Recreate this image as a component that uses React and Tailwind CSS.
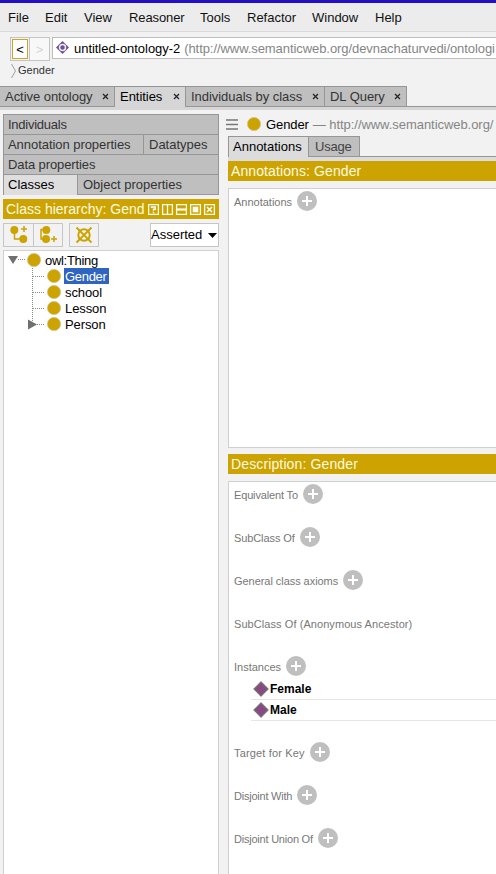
const FONT = "font-['Liberation_Sans',Arial,sans-serif]";

const MENU = [
  ['File', 'w-[37px]'],
  ['Edit', 'w-[39px]'],
  ['View', 'w-[45px]'],
  ['Reasoner', 'w-[71px] tracking-[-0.1px]'],
  ['Tools', 'w-[47px]'],
  ['Refactor', 'w-[65px]'],
  ['Window', 'w-[63px]'],
  ['Help', 'w-[40px]'],
];

const TABS = [
  { label: 'Active ontology', width: 'w-[115px]' },
  { label: 'Entities', width: 'w-[71px]', active: true },
  { label: 'Individuals by class', width: 'w-[139px]' },
  { label: 'DL Query', width: 'w-[82px]' },
];

function Dot() {
  return (
    <svg className="h-4 w-4 shrink-0" viewBox="0 0 16 16">
      <circle cx="8" cy="8" r="6.6" fill="#cca300" stroke="#d2c48c" strokeWidth="0.8" />
    </svg>
  );
}

function AddButton() {
  return (
    <svg className="h-5 w-5 shrink-0" viewBox="0 0 20 20">
      <circle cx="10" cy="10" r="10" fill="#bfbfbf" />
      <path d="M10 5v10M5 10h10" stroke="#fff" strokeWidth="2" />
    </svg>
  );
}

function Menu() {
  return (
    <div className="flex h-[29px] shrink-0 items-center border-b border-[#dadada] bg-[#ececec] pl-2 text-[13px] text-[#111]">
      {MENU.map(([label, width]) => (
        <span key={label} className={`${width} shrink-0`}>{label}</span>
      ))}
    </div>
  );
}

function AddressBar() {
  return (
    <div className="flex h-[54px] shrink-0 flex-col pl-[10px] pt-[5px]">
      <div className="flex h-6 items-start gap-[2px]">
        <div className="flex h-6 w-10 shrink-0 border border-[#c4c4c4] text-[13px]">
          <div className="flex w-[19px] items-center justify-center border-r border-[#c4c4c4] p-px">
            <div className="flex h-full w-full items-center justify-center border border-[#c9a62c] bg-white text-black">&lt;</div>
          </div>
          <div className="flex flex-1 items-center justify-center bg-[#f8f8f8] text-[#d4d4d4]">&gt;</div>
        </div>
        <div className="flex h-[22px] flex-1 items-center whitespace-nowrap border-y border-l border-[#bdbdbd] bg-white pl-[3px] text-[13px]">
          <svg className="relative -top-px h-[13px] w-[13px] shrink-0" viewBox="0 0 13 13">
            <path d="M6.5 0L13 6.5L6.5 13L0 6.5z" fill="#6b5191" />
            <circle cx="6.5" cy="6.5" r="3" fill="none" stroke="#f3edf9" strokeWidth="1.5" />
          </svg>
          <span className="ml-[5px] tracking-[-0.04px] text-black">untitled-ontology-2</span>
          <span className="ml-1 tracking-[-0.07px] text-[#858585]">(http://www.semanticweb.org/devnachaturvedi/ontologi</span>
        </div>
      </div>
      <div className="flex h-[19px] items-center text-[11px] text-[#333]">
        <svg className="h-4 w-2 shrink-0" viewBox="0 0 8 16">
          <path d="M1.5 1L5.5 8L1.5 15" fill="none" stroke="#a0a0a0" />
        </svg>
        Gender
      </div>
    </div>
  );
}

function MainTabs() {
  return (
    <div className="flex h-[24px] shrink-0 flex-col bg-[#d6d6d6]">
      <div className="flex h-[21px] shrink-0 items-end border-b border-[#969696] bg-[#f2f2f2]">
        {TABS.map((t) => (
          <div
            key={t.label}
            className={`${t.width} flex shrink-0 items-center justify-between border-r border-t border-[#969696] pl-[5px] pr-[5px] text-[13px] ${
              t.active ? '-mb-px h-[21px] bg-[#d6d6d6] pb-px text-black' : 'h-5 bg-[#bfbfbf] text-[#333]'
            }`}
          >
            <span className="whitespace-nowrap tracking-[-0.04px]">{t.label}</span>
            <svg className="h-[7px] w-[7px]" viewBox="0 0 7 7">
              <path d="M1 1l5 5M6 1L1 6" stroke="#222" strokeWidth="1.2" />
            </svg>
          </div>
        ))}
      </div>
    </div>
  );
}

function StackedTabs() {
  return (
    <div className="flex h-[81px] flex-col border-l border-r border-[#969696] text-[13px] text-[#333]">
      <div className="flex h-5 items-center border-t border-[#969696] bg-[#bfbfbf] pl-1 tracking-[-0.25px]">Individuals</div>
      <div className="flex h-5 border-t border-[#969696] bg-[#bfbfbf]">
        <div className="flex w-[140px] items-center border-r border-[#969696] pl-1 tracking-[-0.05px]">Annotation properties</div>
        <div className="flex items-center pl-[5px]">Datatypes</div>
      </div>
      <div className="flex h-5 items-center border-t border-[#969696] bg-[#bfbfbf] pl-1 tracking-[-0.1px]">Data properties</div>
      <div className="flex h-[21px] border-t border-[#969696]">
        <div className="flex w-[74px] items-center border-r border-[#969696] bg-[#dedede] pb-px pl-1 text-black">Classes</div>
        <div className="flex flex-1 items-center border-b border-[#969696] bg-[#bfbfbf] pl-[5px]">Object properties</div>
      </div>
    </div>
  );
}

function HeaderIcons() {
  return (
    <svg className="h-[11px] w-[68px] shrink-0" viewBox="0 0 68 11" fill="none" stroke="#fffdf0" strokeWidth="1.3">
      <rect x="0.6" y="0.6" width="9.8" height="9.8" />
      <path d="M3.6 4V2.9h3.7v2.4H5.5v1.5M5.5 7.8v1.4" strokeWidth="1.5" />
      <path d="M14.6 0.6h9.8v9.8h-9.8zM19.5 0v11" />
      <path d="M28.6 0.6h9.8v9.8h-9.8z" />
      <path d="M28 5.5h11" strokeWidth="2.2" />
      <rect x="42.6" y="0.6" width="9.8" height="9.8" />
      <rect x="44.7" y="2.7" width="5.6" height="5.6" fill="#fffdf0" stroke="none" />
      <rect x="56.6" y="0.6" width="9.8" height="9.8" />
      <path d="M59 3l5 5M64 3l-5 5" strokeWidth="1.7" />
    </svg>
  );
}

function Toolbar() {
  return (
    <div className="mt-[4px] flex h-6 items-stretch">
      <div className="flex w-[60px] border border-[#c6c6c6]">
        <div className="flex w-[30px] items-center justify-center border-r border-[#c6c6c6]">
          <svg className="h-[22px] w-7" viewBox="0 0 28 22" fill="#cca300">
            <circle cx="9.3" cy="6" r="4" />
            <circle cx="18.3" cy="15" r="4" />
            <path d="M9.5 8v7h6M19 2v6M16 5h6" fill="none" stroke="#cca300" strokeWidth="1.5" />
          </svg>
        </div>
        <div className="flex flex-1 items-center justify-center">
          <svg className="h-[22px] w-7" viewBox="0 0 28 22" fill="#cca300">
            <circle cx="12.3" cy="6" r="4" />
            <circle cx="12" cy="15" r="4" />
            <path d="M10 5.5H7v9.5h4M20 12v6M17 15h6" fill="none" stroke="#cca300" strokeWidth="1.5" />
          </svg>
        </div>
      </div>
      <div className="ml-[6px] flex w-[30px] items-center justify-center border border-[#c6c6c6]">
        <svg className="h-[18px] w-[18px]" viewBox="0 0 18 18" fill="none" stroke="#cca300" strokeWidth="1.8">
          <circle cx="9" cy="9" r="5.7" strokeWidth="2" />
          <path d="M1.5 1.5l15 15M16.5 1.5l-15 15" />
        </svg>
      </div>
      <div className="ml-auto flex w-[69px] items-center border border-[#c6c6c6] bg-white text-[13px] text-black">
        <span className="-mt-[2px] w-[57px]">Asserted</span>
        <svg className="h-[5px] w-[9px] shrink-0" viewBox="0 0 9 5"><path d="M0 0h9L4.5 5z" /></svg>
      </div>
    </div>
  );
}

function TreeRow({ label, selected, expandable, spacing = 'tracking-[-0.1px]' }) {
  return (
    <div className="flex h-4 items-center">
      <svg className="h-4 w-[42px] shrink-0" viewBox="0 0 42 16">
        <path d="M28.5 0v16" stroke="#888" strokeDasharray="1 1" className={expandable ? 'hidden' : ''} />
        <path d="M29 8.5h11" stroke="#888" strokeDasharray="1 1" />
        {expandable && <path d="M28.5 0v5" stroke="#888" strokeDasharray="1 1" />}
        {expandable && <path d="M24 3.5v10l9-5z" fill="#707070" />}
      </svg>
      <Dot />
      <span className={`ml-[2px] flex h-4 items-center pl-px pr-[2px] ${spacing} ${selected ? 'bg-[#2f65c0] text-white' : ''}`}>{label}</span>
    </div>
  );
}

function Tree() {
  return (
    <div className="mt-[3px] flex-1 border-x border-t border-[#d0d0d0] bg-white pt-px text-[13px] text-black">
      <div className="flex h-4 items-center">
        <svg className="h-4 w-[22px] shrink-0" viewBox="0 0 22 16">
          <path d="M4 4h10L9 12z" fill="#707070" />
          <path d="M14 7.5h7" stroke="#888" strokeDasharray="1 1" />
        </svg>
        <Dot />
        <span className="ml-[3px] tracking-[-0.3px]">owl:Thing</span>
      </div>
      <TreeRow label="Gender" selected spacing="tracking-[-0.3px]" />
      <TreeRow label="school" />
      <TreeRow label="Lesson" />
      <TreeRow label="Person" expandable />
    </div>
  );
}

function Section({ label, add = true, spacing = '' }) {
  return (
    <div className="flex h-[43px] items-start pl-[5px]">
      <div className="flex h-5 items-center gap-[5px] whitespace-nowrap">
        <span className={`relative top-px ${spacing}`}>{label}</span>
        {add && <AddButton />}
      </div>
    </div>
  );
}

function Instance({ name, height = 'h-[22px]' }) {
  return (
    <div className={`${height} ml-[22px] flex items-center border-b border-[#e6e6e6] pl-[2px] text-xs font-bold text-black`}>
      <svg className="h-4 w-4 shrink-0" viewBox="0 0 16 16">
        <path d="M8 1L15 8L8 15L1 8z" fill="#874b82" stroke="#77707a" strokeWidth="1.2" strokeLinejoin="round" />
      </svg>
      <span className="ml-px">{name}</span>
    </div>
  );
}

function Left() {
  return (
    <div className="flex w-[216px] shrink-0 flex-col pt-[4px]">
      <StackedTabs />
      <div className="mt-[4px] flex h-5 shrink-0 items-center bg-[#cca300] pl-[3px] text-sm text-[#fffbe0]">
        <span className="mr-[3px] flex h-5 w-[139px] shrink-0 items-center overflow-hidden whitespace-nowrap">Class hierarchy: Gend</span>
        <HeaderIcons />
      </div>
      <Toolbar />
      <Tree />
    </div>
  );
}

function Right() {
  return (
    <div className="flex min-w-0 flex-1 flex-col pl-[9px]">
      <div className="flex h-[26px] shrink-0 items-center whitespace-nowrap pt-[2px] text-[13px]">
        <svg className="-ml-[2px] h-[11px] w-3 shrink-0" viewBox="0 0 12 11">
          <path d="M0 1h12M0 5.5h12M0 10h12" stroke="#777" strokeWidth="1.7" />
        </svg>
        <span className="ml-2 flex"><Dot /></span>
        <span className="ml-[4px] tracking-[-0.1px] text-black">Gender</span>
        <span className="ml-1 tracking-[-0.05px] text-[#858585]">— http://www.semanticweb.org/</span>
      </div>
      <div className="flex h-[25px] shrink-0 flex-col bg-[#dcdcdc]">
        <div className="flex h-[21px] items-end border-b border-[#969696] bg-[#f2f2f2] text-[13px]">
          <div className="-mb-px flex h-[21px] w-[81px] items-center border-l border-r border-t border-[#969696] bg-[#dcdcdc] pb-px pl-1 text-black">Annotations</div>
          <div className="flex h-5 w-[51px] items-center border-r border-t border-[#969696] bg-[#bfbfbf] pl-[6px] tracking-[-0.2px] text-[#444]">Usage</div>
        </div>
      </div>
      <div className="flex h-5 shrink-0 items-center bg-[#cca300] pl-[3px] text-sm tracking-[0.1px] text-[#fffbe0]">Annotations: Gender</div>
      <div className="mt-[7px] h-[260px] shrink-0 border-y border-l border-[#d0d0d0] bg-white pt-[2px] text-[11px] text-[#777]">
        <Section label="Annotations" />
      </div>
      <div className="mt-[6px] flex h-5 shrink-0 items-center bg-[#cca300] pl-[3px] text-sm tracking-[0.13px] text-[#fffbe0]">Description: Gender</div>
      <div className="mt-[7px] flex-1 border-l border-t border-[#d0d0d0] bg-white pt-[2px] text-[11px] text-[#777]">
        <Section label="Equivalent To" spacing="tracking-[-0.15px]" />
        <Section label="SubClass Of" spacing="tracking-[-0.1px]" />
        <Section label="General class axioms" spacing="tracking-[-0.05px]" />
        <Section label="SubClass Of (Anonymous Ancestor)" add={false} spacing="tracking-[0.07px]" />
        <div className="h-[86px]">
          <div className="h-[22px]"><Section label="Instances" /></div>
          <Instance name="Female" />
          <Instance name="Male" height="h-[21px]" />
        </div>
        <Section label="Target for Key" spacing="tracking-[0.15px]" />
        <Section label="Disjoint With" spacing="tracking-[-0.23px]" />
        <Section label="Disjoint Union Of" spacing="tracking-[-0.22px]" />
      </div>
    </div>
  );
}

export default function App() {
  return (
    <div className={`${FONT} flex h-[874px] w-[496px] flex-col overflow-hidden bg-[#f2f2f2] leading-none`}>
      <div className="h-[3px] shrink-0 bg-[#2310c4]" />
      <Menu />
      <AddressBar />
      <MainTabs />
      <div className="flex min-h-0 flex-1 pl-[3px]">
        <Left />
        <Right />
      </div>
    </div>
  );
}
